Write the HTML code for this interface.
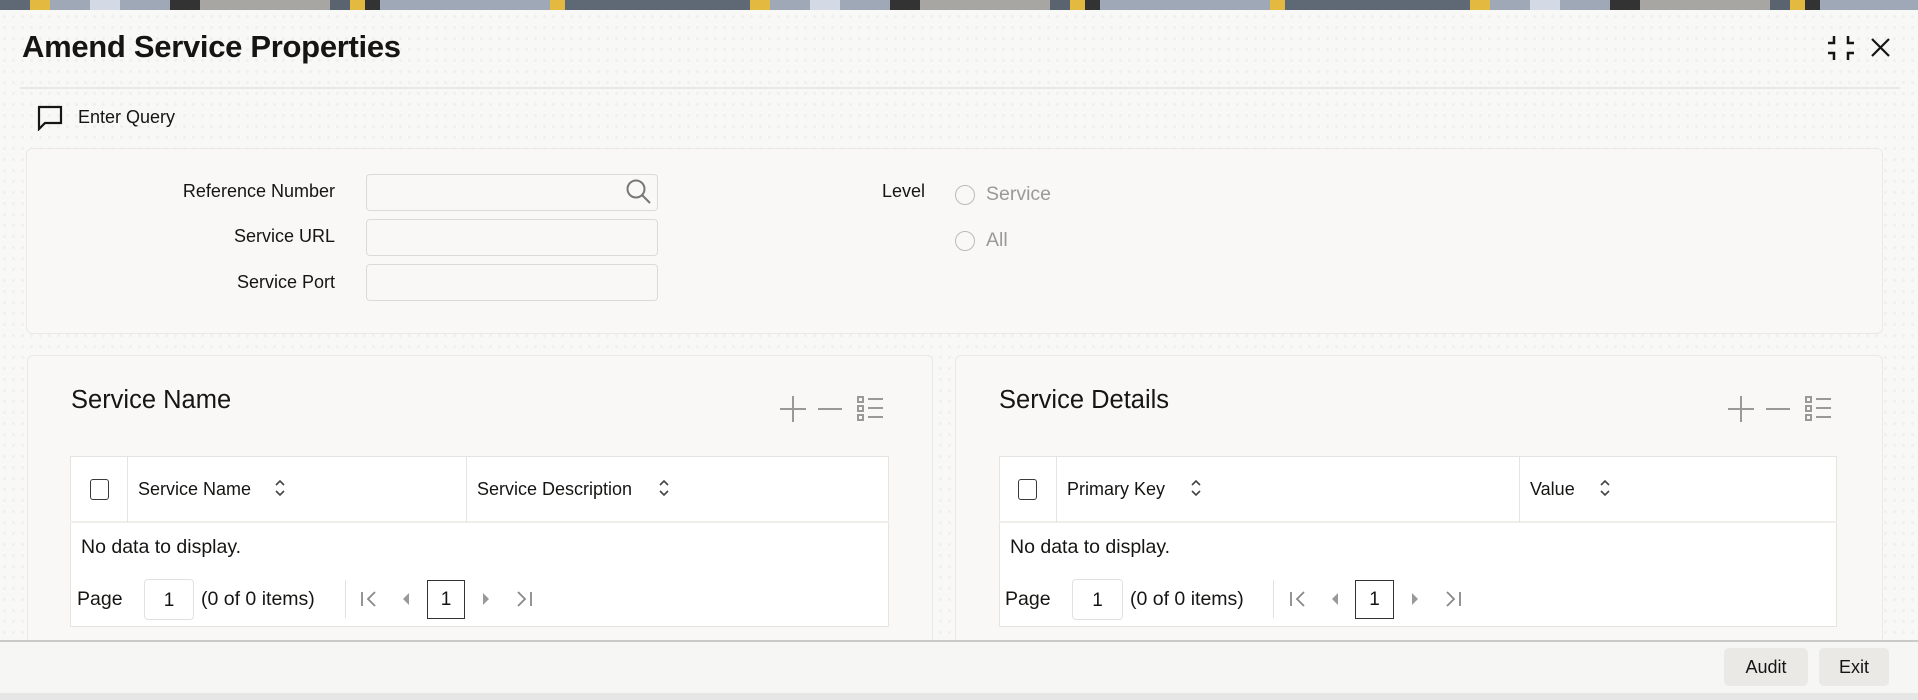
<!DOCTYPE html>
<html><head><meta charset="utf-8"><style>
*{box-sizing:border-box;margin:0;padding:0}
body{width:1918px;height:700px;overflow:hidden;position:relative;background:#f8f8f7;background-image:radial-gradient(#efefed 1.2px,transparent 1.6px);background-size:9px 11px;font-family:"Liberation Sans",sans-serif;color:#161513}
.a{position:absolute}
.banner{left:0;top:0;width:1918px;height:10px;background:linear-gradient(90deg,#5f6975 0,#5f6975 30px,#e3b93f 30px,#e3b93f 50px,#9ea8b6 50px,#9ea8b6 90px,#d3dae6 90px,#d3dae6 120px,#9ea8b6 120px,#9ea8b6 170px,#333 170px,#333 200px,#a8a6a2 200px,#a8a6a2 330px,#5a6470 330px,#5a6470 350px,#e3b93f 350px,#e3b93f 365px,#333 365px,#333 380px,#9ea8b6 380px,#9ea8b6 550px,#e3b93f 550px,#e3b93f 565px,#5f6975 565px,#5f6975 720px);background-size:720px 10px}
.lbl{font-size:18px;text-align:right;width:300px}
.inp{background:#f9f8f6;border:1px solid #dcdad6;border-radius:4px;height:37px;width:292px;left:366px}
.panel{background:#f9f8f6;border:1px solid #ebe9e5;border-radius:6px}
.tbl{background:#fff;border:1px solid #e6e4e0}
.th{font-size:18px}
.t19{font-size:19.5px}
.cb{width:19px;height:21px;border:1.5px solid #3a3a3a;border-radius:3px;background:#fff}
.btn{background:#ebe9e5;border-radius:5px;font-size:18px;text-align:center;line-height:38px;height:38px}
</style></head><body>
<div class="a banner"></div>
<div class="a" style="left:22px;top:29px;font-size:31px;font-weight:bold;letter-spacing:-0.3px">Amend Service Properties</div>
<svg class="a" style="left:1826px;top:34px" width="30" height="28" viewBox="0 0 30 28" fill="none" stroke="#161513" stroke-width="2.5"><path d="M2 9H8V2M22 2V9H28M2 19H8V26M22 26V19H28"/></svg>
<svg class="a" style="left:1870px;top:37px" width="22" height="22" viewBox="0 0 22 22" stroke="#161513" stroke-width="2.2"><path d="M2 2L19 19M19 2L2 19"/></svg>
<div class="a" style="left:20px;top:87px;width:1880px;height:2px;background:#e8e8e6"></div>
<svg class="a" style="left:36px;top:105px" width="28" height="26" viewBox="0 0 28 26" fill="none" stroke="#161513" stroke-width="2.2"><path d="M2 2H25V18H9L3 24V2Z"/></svg>
<div class="a" style="left:78px;top:107px;font-size:18px">Enter Query</div>

<div class="a panel" style="left:26px;top:148px;width:1857px;height:186px"></div>
<div class="a lbl" style="left:35px;top:181px">Reference Number</div>
<div class="a lbl" style="left:35px;top:226px">Service URL</div>
<div class="a lbl" style="left:35px;top:272px">Service Port</div>
<div class="a inp" style="top:174px"></div>
<div class="a inp" style="top:219px"></div>
<div class="a inp" style="top:264px"></div>
<svg class="a" style="left:625px;top:178px" width="28" height="28" viewBox="0 0 28 28" fill="none" stroke="#777" stroke-width="2"><circle cx="11" cy="11" r="8.5"/><path d="M17 17L25 25"/></svg>
<div class="a" style="left:882px;top:181px;font-size:18px">Level</div>
<div class="a" style="left:955px;top:185px;width:20px;height:20px;border:1.5px solid #bbb;border-radius:50%"></div>
<div class="a" style="left:986px;top:183px;font-size:19.5px;color:#999">Service</div>
<div class="a" style="left:955px;top:231px;width:20px;height:20px;border:1.5px solid #bbb;border-radius:50%"></div>
<div class="a" style="left:986px;top:229px;font-size:19.5px;color:#999">All</div>

<!-- left panel -->
<div class="a panel" style="left:27px;top:355px;width:906px;height:300px"></div>
<div class="a" style="left:71px;top:386px;font-size:25.5px">Service Name</div>
<svg class="a" style="left:778px;top:394px" width="108" height="30" viewBox="0 0 108 30" fill="none" stroke="#999" stroke-width="2"><path d="M15 2V28M2 15H28M40 15H64M80 3h5v5h-5zM80 12h5v5h-5zM80 21h5v5h-5zM90 5H105M90 14H105M90 23H105"/></svg>
<div class="a tbl" style="left:70px;top:456px;width:819px;height:171px"></div>
<div class="a" style="left:70px;top:521px;width:819px;height:2px;background:#efeeeb"></div>
<div class="a" style="left:127px;top:457px;width:1px;height:65px;background:#e6e4e0"></div>
<div class="a" style="left:466px;top:457px;width:1px;height:65px;background:#e6e4e0"></div>
<div class="a cb" style="left:90px;top:479px"></div>
<div class="a th" style="left:138px;top:479px">Service Name</div>
<svg class="a" style="left:274px;top:479px" width="12" height="18" viewBox="0 0 12 18" fill="none" stroke="#444" stroke-width="1.6"><path d="M2 6L6 2L10 6M2 12L6 16L10 12"/></svg>
<div class="a th" style="left:477px;top:479px">Service Description</div>
<svg class="a" style="left:658px;top:479px" width="12" height="18" viewBox="0 0 12 18" fill="none" stroke="#444" stroke-width="1.6"><path d="M2 6L6 2L10 6M2 12L6 16L10 12"/></svg>
<div class="a t19" style="left:81px;top:536px">No data to display.</div>
<div class="a t19" style="left:77px;top:588px">Page</div>
<div class="a" style="left:144px;top:579px;width:50px;height:41px;border:1px solid #e3e1dd;border-radius:4px;background:#fff;text-align:center;line-height:41px;font-size:19px">1</div>
<div class="a t19" style="left:201px;top:588px">(0 of 0 items)</div>
<div class="a" style="left:345px;top:580px;width:1px;height:38px;background:#e3e1dd"></div>
<svg class="a" style="left:360px;top:590px" width="20" height="18" viewBox="0 0 20 18" fill="none" stroke="#888" stroke-width="1.8"><path d="M2 2V16M15 2L8 9L15 16"/></svg>
<div class="a" style="left:403px;top:593px;width:0;height:0;border-top:6px solid transparent;border-bottom:6px solid transparent;border-right:6px solid #999"></div>
<div class="a" style="left:427px;top:580px;width:38px;height:39px;border:1.5px solid #333;text-align:center;line-height:37px;font-size:19px;background:#fff">1</div>
<div class="a" style="left:483px;top:593px;width:0;height:0;border-top:6px solid transparent;border-bottom:6px solid transparent;border-left:6px solid #999"></div>
<svg class="a" style="left:513px;top:590px" width="20" height="18" viewBox="0 0 20 18" fill="none" stroke="#888" stroke-width="1.8"><path d="M18 2V16M5 2L12 9L5 16"/></svg>

<!-- right panel -->
<div class="a panel" style="left:955px;top:355px;width:928px;height:300px"></div>
<div class="a" style="left:999px;top:386px;font-size:25.5px">Service Details</div>
<svg class="a" style="left:1726px;top:394px" width="108" height="30" viewBox="0 0 108 30" fill="none" stroke="#999" stroke-width="2"><path d="M15 2V28M2 15H28M40 15H64M80 3h5v5h-5zM80 12h5v5h-5zM80 21h5v5h-5zM90 5H105M90 14H105M90 23H105"/></svg>
<div class="a tbl" style="left:999px;top:456px;width:838px;height:171px"></div>
<div class="a" style="left:999px;top:521px;width:838px;height:2px;background:#efeeeb"></div>
<div class="a" style="left:1056px;top:457px;width:1px;height:65px;background:#e6e4e0"></div>
<div class="a" style="left:1519px;top:457px;width:1px;height:65px;background:#e6e4e0"></div>
<div class="a cb" style="left:1018px;top:479px"></div>
<div class="a th" style="left:1067px;top:479px">Primary Key</div>
<svg class="a" style="left:1190px;top:479px" width="12" height="18" viewBox="0 0 12 18" fill="none" stroke="#444" stroke-width="1.6"><path d="M2 6L6 2L10 6M2 12L6 16L10 12"/></svg>
<div class="a th" style="left:1530px;top:479px">Value</div>
<svg class="a" style="left:1599px;top:479px" width="12" height="18" viewBox="0 0 12 18" fill="none" stroke="#444" stroke-width="1.6"><path d="M2 6L6 2L10 6M2 12L6 16L10 12"/></svg>
<div class="a t19" style="left:1010px;top:536px">No data to display.</div>
<div class="a t19" style="left:1005px;top:588px">Page</div>
<div class="a" style="left:1072px;top:579px;width:51px;height:41px;border:1px solid #e3e1dd;border-radius:4px;background:#fff;text-align:center;line-height:41px;font-size:19px">1</div>
<div class="a t19" style="left:1130px;top:588px">(0 of 0 items)</div>
<div class="a" style="left:1273px;top:580px;width:1px;height:38px;background:#e3e1dd"></div>
<svg class="a" style="left:1289px;top:590px" width="20" height="18" viewBox="0 0 20 18" fill="none" stroke="#888" stroke-width="1.8"><path d="M2 2V16M15 2L8 9L15 16"/></svg>
<div class="a" style="left:1332px;top:593px;width:0;height:0;border-top:6px solid transparent;border-bottom:6px solid transparent;border-right:6px solid #999"></div>
<div class="a" style="left:1355px;top:580px;width:39px;height:39px;border:1.5px solid #333;text-align:center;line-height:37px;font-size:19px;background:#fff">1</div>
<div class="a" style="left:1412px;top:593px;width:0;height:0;border-top:6px solid transparent;border-bottom:6px solid transparent;border-left:6px solid #999"></div>
<svg class="a" style="left:1442px;top:590px" width="20" height="18" viewBox="0 0 20 18" fill="none" stroke="#888" stroke-width="1.8"><path d="M18 2V16M5 2L12 9L5 16"/></svg>

<!-- footer -->
<div class="a" style="left:0;top:640px;width:1918px;height:60px;background:#f6f6f5;border-top:2px solid #c9c9c9"></div>
<div class="a btn" style="left:1724px;top:648px;width:84px">Audit</div>
<div class="a btn" style="left:1819px;top:648px;width:70px">Exit</div>
<div class="a" style="left:0;top:693px;width:1918px;height:7px;background:#e6e6e6"></div>
</body></html>
